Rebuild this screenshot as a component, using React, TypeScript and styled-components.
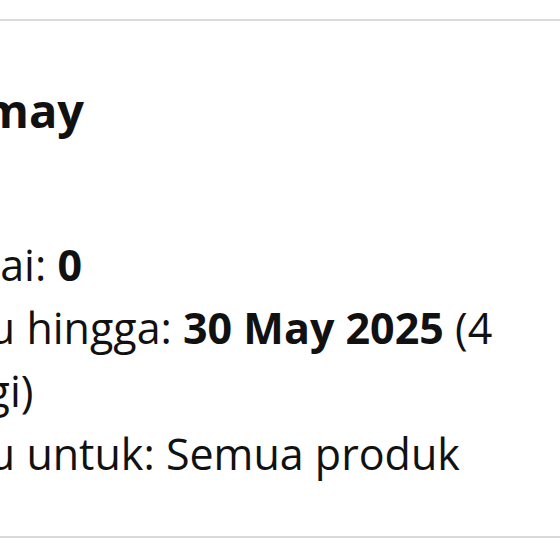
import styled, { createGlobalStyle } from "styled-components";

const GlobalStyle = createGlobalStyle`
  html, body {
    margin: 0;
    padding: 0;
    background: #ffffff;
    overflow: hidden;
  }
  body {
    font-family: "Open Sans", "Noto Sans", "Liberation Sans", sans-serif;
    color: #111111;
  }
`;

const Page = styled.div`
  width: 560px;
  height: 560px;
  overflow: hidden;
  padding-top: 19px;
  box-sizing: border-box;
`;

const VoucherCard = styled.div`
  margin-left: -160px;
  width: 726px;
  box-sizing: border-box;
  padding: 57px 20px 51px;
  border: 2px solid #dadada;
  border-radius: 6px;
  background: #ffffff;
`;

const VoucherTitle = styled.div`
  font-size: 47px;
  font-weight: 700;
  line-height: 64px;
  margin-bottom: 91px;
`;

const InfoList = styled.div`
  display: flex;
  flex-direction: column;
`;

const InfoRow = styled.div`
  font-size: 43px;
  line-height: 63px;
  font-weight: 400;

  b {
    font-weight: 700;
  }
`;

type VoucherProps = {
  name: string;
  used: number;
  validUntil: string;
  daysLeft: number;
  appliesTo: string;
};

function VoucherDetail({ name, used, validUntil, daysLeft, appliesTo }: VoucherProps) {
  return (
    <VoucherCard>
      <VoucherTitle>{name}</VoucherTitle>
      <InfoList>
        <InfoRow>
          Terpakai: <b>{used}</b>
        </InfoRow>
        <InfoRow>
          Berlaku hingga: <b>{validUntil}</b> ({daysLeft} hari lagi)
        </InfoRow>
        <InfoRow>Berlaku untuk: {appliesTo}</InfoRow>
      </InfoList>
    </VoucherCard>
  );
}

export default function App() {
  return (
    <Page>
      <GlobalStyle />
      <VoucherDetail
        name="Hoki may"
        used={0}
        validUntil="30 May 2025"
        daysLeft={4}
        appliesTo="Semua produk"
      />
    </Page>
  );
}
